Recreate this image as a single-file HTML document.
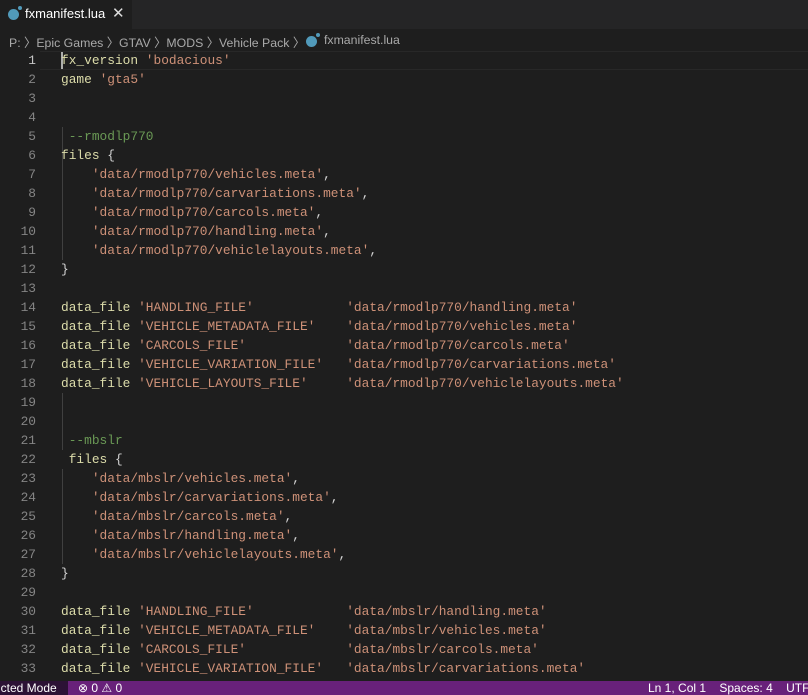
<!DOCTYPE html>
<html><head><meta charset="utf-8"><style>
*{margin:0;padding:0;box-sizing:border-box}
body{width:808px;height:695px;background:#1e1e1e;overflow:hidden;position:relative;font-family:"Liberation Sans",sans-serif}
.tabs{position:absolute;left:0;top:0;width:808px;height:29px;background:#252526}
.tab{position:absolute;left:0;top:0;width:132px;height:29px;background:#1e1e1e;color:#fff;font-size:13px}
.tab .t{position:absolute;left:25px;top:6px}
.tab .x{position:absolute;left:112px;top:4px;font-size:15px;color:#ddd}
.icon{position:absolute;width:11px;height:11px;border-radius:50%;background:#519aba}
.icon:after{content:"";position:absolute;right:-3px;top:-3px;width:4px;height:4px;border-radius:50%;background:#519aba}
.bc{position:absolute;left:9px;top:33px;color:#a9a9a9;font-size:12.3px;white-space:pre}
.code{position:absolute;left:0;top:51px;font-family:"Liberation Mono",monospace;font-size:12.85px}
.ln{position:absolute;left:0;width:36px;text-align:right;color:#858585}
.row{position:absolute;left:61px;color:#d4d4d4;width:740px}
.r{height:19px;line-height:19px;white-space:pre}
.f{color:#dcdcaa}.s{color:#ce9178}.c{color:#6a9955}
.guide{position:absolute;left:62px;width:1px;background:#404040}
.status{position:absolute;left:0;top:681px;width:808px;height:14px;background:#68217a;color:#fff;font-size:12px;line-height:15px;white-space:pre;overflow:hidden}
</style></head><body>
<div class="tabs"><div class="tab"><div class="icon" style="left:8px;top:9px"></div><span class="t">fxmanifest.lua</span><span class="x">✕</span></div></div>
<div class="bc">P: 〉Epic Games 〉GTAV 〉MODS 〉Vehicle Pack 〉</div>
<div class="icon" style="left:306px;top:36px"></div>
<div style="position:absolute;left:324px;top:33px;color:#a9a9a9;font-size:12.3px">fxmanifest.lua</div>
<div style="position:absolute;left:40px;top:51px;width:768px;height:19px;border-top:1px solid #282828;border-bottom:1px solid #282828"></div>
<div style="position:absolute;left:61px;top:52px;width:2px;height:17px;background:#aeafad"></div>
<div class="guide" style="top:127px;height:38px"></div>
<div class="guide" style="top:165px;height:95px"></div>
<div class="guide" style="top:393px;height:57px"></div>
<div class="guide" style="top:469px;height:95px"></div>
<div class="code"><div class="ln" style="top:0"><div class="r" style="color:#c6c6c6">1</div><div class="r">2</div><div class="r">3</div><div class="r">4</div><div class="r">5</div><div class="r">6</div><div class="r">7</div><div class="r">8</div><div class="r">9</div><div class="r">10</div><div class="r">11</div><div class="r">12</div><div class="r">13</div><div class="r">14</div><div class="r">15</div><div class="r">16</div><div class="r">17</div><div class="r">18</div><div class="r">19</div><div class="r">20</div><div class="r">21</div><div class="r">22</div><div class="r">23</div><div class="r">24</div><div class="r">25</div><div class="r">26</div><div class="r">27</div><div class="r">28</div><div class="r">29</div><div class="r">30</div><div class="r">31</div><div class="r">32</div><div class="r">33</div></div><div class="row" style="top:0"><div class="r"><span class="f">fx_version</span> <span class="s">'bodacious'</span></div><div class="r"><span class="f">game</span> <span class="s">'gta5'</span></div><div class="r"> </div><div class="r"> </div><div class="r"> <span class="c">--rmodlp770</span></div><div class="r"><span class="f">files</span> {</div><div class="r">    <span class="s">'data/rmodlp770/vehicles.meta'</span>,</div><div class="r">    <span class="s">'data/rmodlp770/carvariations.meta'</span>,</div><div class="r">    <span class="s">'data/rmodlp770/carcols.meta'</span>,</div><div class="r">    <span class="s">'data/rmodlp770/handling.meta'</span>,</div><div class="r">    <span class="s">'data/rmodlp770/vehiclelayouts.meta'</span>,</div><div class="r">}</div><div class="r"> </div><div class="r"><span class="f">data_file</span> <span class="s">'HANDLING_FILE'</span>            <span class="s">'data/rmodlp770/handling.meta'</span></div><div class="r"><span class="f">data_file</span> <span class="s">'VEHICLE_METADATA_FILE'</span>    <span class="s">'data/rmodlp770/vehicles.meta'</span></div><div class="r"><span class="f">data_file</span> <span class="s">'CARCOLS_FILE'</span>             <span class="s">'data/rmodlp770/carcols.meta'</span></div><div class="r"><span class="f">data_file</span> <span class="s">'VEHICLE_VARIATION_FILE'</span>   <span class="s">'data/rmodlp770/carvariations.meta'</span></div><div class="r"><span class="f">data_file</span> <span class="s">'VEHICLE_LAYOUTS_FILE'</span>     <span class="s">'data/rmodlp770/vehiclelayouts.meta'</span></div><div class="r"> </div><div class="r"> </div><div class="r"> <span class="c">--mbslr</span></div><div class="r"> <span class="f">files</span> {</div><div class="r">    <span class="s">'data/mbslr/vehicles.meta'</span>,</div><div class="r">    <span class="s">'data/mbslr/carvariations.meta'</span>,</div><div class="r">    <span class="s">'data/mbslr/carcols.meta'</span>,</div><div class="r">    <span class="s">'data/mbslr/handling.meta'</span>,</div><div class="r">    <span class="s">'data/mbslr/vehiclelayouts.meta'</span>,</div><div class="r">}</div><div class="r"> </div><div class="r"><span class="f">data_file</span> <span class="s">'HANDLING_FILE'</span>            <span class="s">'data/mbslr/handling.meta'</span></div><div class="r"><span class="f">data_file</span> <span class="s">'VEHICLE_METADATA_FILE'</span>    <span class="s">'data/mbslr/vehicles.meta'</span></div><div class="r"><span class="f">data_file</span> <span class="s">'CARCOLS_FILE'</span>             <span class="s">'data/mbslr/carcols.meta'</span></div><div class="r"><span class="f">data_file</span> <span class="s">'VEHICLE_VARIATION_FILE'</span>   <span class="s">'data/mbslr/carvariations.meta'</span></div></div></div>
<div class="status"><span style="position:absolute;left:0;top:0;width:68px;height:14px;background:#2c1235"></span><span style="position:absolute;left:-2px;top:0">icted Mode</span><span style="position:absolute;left:78px;top:0">⊗ 0 ⚠ 0</span><span style="position:absolute;left:648px;top:0">Ln 1, Col 1    Spaces: 4    UTF-8</span></div>
</body></html>
